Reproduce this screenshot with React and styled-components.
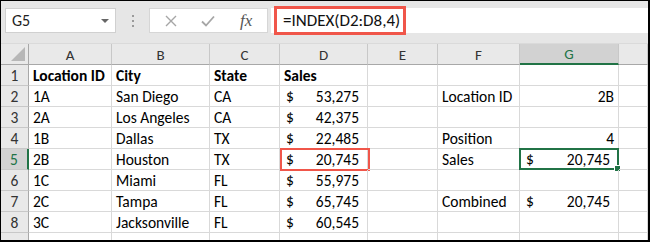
import React from "react";
import styled, { createGlobalStyle, css } from "styled-components";

const Global = createGlobalStyle`
  html, body { margin: 0; padding: 0; background: #000; }
  * { box-sizing: border-box; }
`;

const GREEN = "#217346";
const RED = "#f0564a";
const GRID = "#d9d9d9";
const FONT = `"Carlito", "Lato", "Liberation Sans", sans-serif`;

const Frame = styled.div`
  width: 650px;
  height: 242px;
  border-top: 1px solid #000;
  border-left: 1px solid #000;
  border-right: 2px solid #000;
  border-bottom: 2px solid #000;
  background: #fff;
  overflow: hidden;
  font-family: ${FONT};
  display: flex;
  flex-direction: column;
`;

const FormulaBar = styled.div`
  height: 43px;
  flex: none;
  background: #e6e6e6;
  display: flex;
  align-items: flex-start;
  padding: 7px 0 0 4px;
  border-bottom: 1px solid #dadada;
`;

const NameBox = styled.div`
  width: 111px;
  height: 25px;
  background: #fff;
  border: 1px solid #d0d0d0;
  display: flex;
  align-items: center;
  justify-content: space-between;
  padding: 0 6px 0 6px;
  font-size: 16px;
  color: #222;
`;

const Arrow = styled.span`
  width: 0;
  height: 0;
  border-left: 4px solid transparent;
  border-right: 4px solid transparent;
  border-top: 4px solid #666;
  margin-top: 1px;
`;

const Dots = styled.div`
  width: 33px;
  height: 25px;
  display: flex;
  flex-direction: column;
  align-items: center;
  justify-content: center;
  gap: 3px;
  & > span {
    width: 2px;
    height: 2px;
    background: #9a9a9a;
  }
`;

const ButtonsBox = styled.div`
  width: 119px;
  height: 25px;
  background: #fff;
  border: 1px solid #d6d6d6;
  display: flex;
  align-items: center;
  padding-left: 14px;
  gap: 22px;
`;

const Fx = styled.span`
  font-family: "Liberation Serif", serif;
  font-style: italic;
  font-size: 17px;
  color: #555;
  margin-left: 2px;
`;

const FormulaInput = styled.div`
  position: relative;
  flex: 1;
  height: 25px;
  margin-left: 3px;
  background: #fff;
  display: flex;
  align-items: center;
  padding-left: 12px;
  font-size: 17px;
  color: #111;
`;

const FormulaOutline = styled.div`
  position: absolute;
  left: 3px;
  top: -2px;
  width: 132px;
  height: 29px;
  border: 3px solid ${RED};
  pointer-events: none;
`;

const Sheet = styled.div`
  display: grid;
  grid-template-columns: 28px 83px 98px 70px 88px 70px 82px 99px 1fr;
  grid-auto-rows: 21px;
  flex: none;
`;

const HeadCell = styled.div`
  position: relative;
  background: ${(p) => (p.$sel ? "#d2d2d2" : "#e9e9e9")};
  color: ${(p) => (p.$sel ? GREEN : "#333")};
  border-right: 1px solid #c8c8c8;
  border-bottom: 1px solid #a8a8a8;
  display: flex;
  align-items: center;
  justify-content: center;
  font-size: 15px;
  padding-top: 1px;
  ${(p) =>
    p.$sel &&
    css`
      border-bottom: 2px solid ${GREEN};
    `}
`;

const Corner = styled(HeadCell)`
  border-right: 1px solid #a8a8a8;
  &::after {
    content: "";
    position: absolute;
    right: 3px;
    bottom: 3px;
    width: 0;
    height: 0;
    border-left: 14px solid transparent;
    border-bottom: 14px solid #b7b7b7;
  }
`;

const RowHead = styled.div`
  background: ${(p) => (p.$sel ? "#d2d2d2" : "#e9e9e9")};
  color: ${(p) => (p.$sel ? GREEN : "#333")};
  border-right: ${(p) => (p.$sel ? `2px solid ${GREEN}` : "1px solid #a8a8a8")};
  border-bottom: 1px solid #c8c8c8;
  display: flex;
  align-items: center;
  justify-content: center;
  font-size: 15.5px;
  padding-top: 1px;
`;

const Cell = styled.div`
  position: relative;
  border-right: 1px solid ${GRID};
  border-bottom: 1px solid ${GRID};
  display: flex;
  align-items: center;
  justify-content: ${(p) => (p.$right ? "flex-end" : "flex-start")};
  padding: 1px 4px 0 4px;
  font-size: 15.5px;
  font-weight: ${(p) => (p.$bold ? 700 : 400)};
  color: #000;
  white-space: nowrap;
  overflow: visible;
`;

const Money = styled(Cell)`
  justify-content: space-between;
  padding: 1px 8px 0 6px;
`;

const RedOutline = styled.div`
  position: absolute;
  left: 0;
  top: -1px;
  right: -3px;
  bottom: -2px;
  border: 2px solid ${RED};
  pointer-events: none;
`;

const Selection = styled.div`
  position: absolute;
  left: -1px;
  top: -1px;
  right: -1px;
  bottom: -1px;
  border: 2px solid ${GREEN};
  pointer-events: none;
  &::after {
    content: "";
    position: absolute;
    right: -4px;
    bottom: -4px;
    width: 5px;
    height: 5px;
    background: ${GREEN};
    border: 1px solid #fff;
  }
`;

const cols = ["A", "B", "C", "D", "E", "F", "G", ""];

const rows = [
  [{ t: "Location ID", b: 1 }, { t: "City", b: 1 }, { t: "State", b: 1 }, { t: "Sales", b: 1 }, {}, {}, {}, {}],
  [{ t: "1A" }, { t: "San Diego" }, { t: "CA" }, { m: "53,275" }, {}, { t: "Location ID" }, { t: "2B", r: 1 }, {}],
  [{ t: "2A" }, { t: "Los Angeles" }, { t: "CA" }, { m: "42,375" }, {}, {}, {}, {}],
  [{ t: "1B" }, { t: "Dallas" }, { t: "TX" }, { m: "22,485" }, {}, { t: "Position" }, { t: "4", r: 1 }, {}],
  [{ t: "2B" }, { t: "Houston" }, { t: "TX" }, { m: "20,745", red: 1 }, {}, { t: "Sales" }, { m: "20,745", sel: 1 }, {}],
  [{ t: "1C" }, { t: "Miami" }, { t: "FL" }, { m: "55,975" }, {}, {}, {}, {}],
  [{ t: "2C" }, { t: "Tampa" }, { t: "FL" }, { m: "65,745" }, {}, { t: "Combined" }, { m: "20,745" }, {}],
  [{ t: "3C" }, { t: "Jacksonville" }, { t: "FL" }, { m: "60,545" }, {}, {}, {}, {}],
  [{}, {}, {}, {}, {}, {}, {}, {}],
];

function renderCell(c, key) {
  const overlay = c.red ? <RedOutline /> : c.sel ? <Selection /> : null;
  if (c.m) {
    return (
      <Money key={key}>
        <span>$</span>
        <span>{c.m}</span>
        {overlay}
      </Money>
    );
  }
  return (
    <Cell key={key} $bold={c.b} $right={c.r}>
      {c.t}
      {overlay}
    </Cell>
  );
}

export default function App() {
  return (
    <>
      <Global />
      <Frame>
        <FormulaBar>
          <NameBox>
            <span>G5</span>
            <Arrow />
          </NameBox>
          <Dots>
            <span />
            <span />
            <span />
          </Dots>
          <ButtonsBox>
            <svg width="14" height="14" viewBox="0 0 14 14">
              <path d="M2 2 L12 12 M12 2 L2 12" stroke="#a6a6a6" strokeWidth="1.4" fill="none" />
            </svg>
            <svg width="16" height="14" viewBox="0 0 16 14">
              <path d="M2 7.5 L6 11.5 L14 2.5" stroke="#a6a6a6" strokeWidth="1.8" fill="none" />
            </svg>
            <Fx>fx</Fx>
          </ButtonsBox>
          <FormulaInput>
            =INDEX(D2:D8,4)
            <FormulaOutline />
          </FormulaInput>
        </FormulaBar>
        <Sheet>
          <Corner />
          {cols.map((c, i) => (
            <HeadCell key={i} $sel={c === "G"}>
              {c}
            </HeadCell>
          ))}
          {rows.map((r, i) => (
            <React.Fragment key={i}>
              <RowHead $sel={i === 4}>{i < 8 ? i + 1 : ""}</RowHead>
              {r.map((c, j) => renderCell(c, `${i}-${j}`))}
            </React.Fragment>
          ))}
        </Sheet>
      </Frame>
    </>
  );
}
